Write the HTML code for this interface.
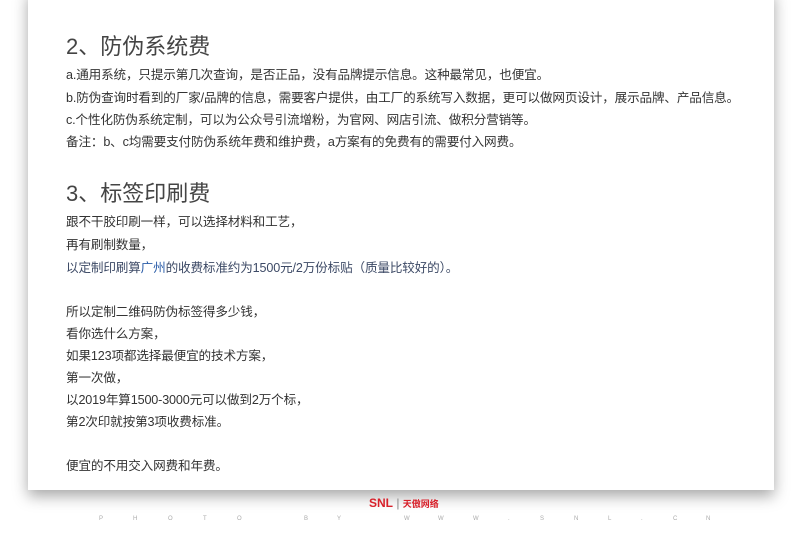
<!DOCTYPE html>
<html><head><meta charset="utf-8"><style>
html,body{margin:0;padding:0;background:#fff;width:800px;height:533px;overflow:hidden;}
body{font-family:"Liberation Sans","Noto Sans CJK SC",sans-serif;position:relative;}
.card{position:absolute;left:28px;top:-10px;width:746px;height:500px;background:#fff;box-shadow:0 6px 14px rgba(0,0,0,0.35);}
.t{position:absolute;left:66px;color:#333;font-size:12.6px;line-height:22px;white-space:nowrap;letter-spacing:-0.15px;}
.h{position:absolute;left:66px;color:#444;font-size:22px;line-height:30px;white-space:nowrap;}
.logo{position:absolute;left:369px;top:497px;font-size:12px;font-weight:bold;color:#d8202a;white-space:nowrap;line-height:12px;}
.photo{position:absolute;top:516px;font-size:6px;color:#aaa;font-family:"Liberation Sans",sans-serif;}
</style></head><body>
<div class="card"></div>
<div class="h" style="top:32px">2、防伪系统费</div>
<div class="t" style="top:64px">a.通用系统，只提示第几次查询，是否正品，没有品牌提示信息。这种最常见，也便宜。</div>
<div class="t" style="top:87px">b.防伪查询时看到的厂家/品牌的信息，需要客户提供，由工厂的系统写入数据，更可以做网页设计，展示品牌、产品信息。</div>
<div class="t" style="top:109px">c.个性化防伪系统定制，可以为公众号引流增粉，为官网、网店引流、做积分营销等。</div>
<div class="t" style="top:131px">备注：b、c均需要支付防伪系统年费和维护费，a方案有的免费有的需要付入网费。</div>
<div class="h" style="top:179px">3、标签印刷费</div>
<div class="t" style="top:211px">跟不干胶印刷一样，可以选择材料和工艺，</div>
<div class="t" style="top:234px">再有刷制数量，</div>
<div class="t" style="top:257px;color:#3d4a66">以定制印刷算<span style="color:#2a5ca8">广州</span>的收费标准约为1500元/2万份标贴（质量比较好的）。</div>
<div class="t" style="top:301px">所以定制二维码防伪标签得多少钱，</div>
<div class="t" style="top:323px">看你选什么方案，</div>
<div class="t" style="top:345px">如果123项都选择最便宜的技术方案，</div>
<div class="t" style="top:367px">第一次做，</div>
<div class="t" style="top:389px">以2019年算1500-3000元可以做到2万个标，</div>
<div class="t" style="top:411px">第2次印就按第3项收费标准。</div>
<div class="t" style="top:455px">便宜的不用交入网费和年费。</div>
<div class="logo">SNL<span style="color:#888;font-weight:normal"> | </span><span style="font-size:9px">天傲网络</span></div>
<div class="photo" style="left:99px">P</div><div class="photo" style="left:133px">H</div><div class="photo" style="left:168px">O</div><div class="photo" style="left:203px">T</div><div class="photo" style="left:237px">O</div>
<div class="photo" style="left:304px">B</div><div class="photo" style="left:337px">Y</div>
<div class="photo" style="left:404px">W</div><div class="photo" style="left:438px">W</div><div class="photo" style="left:473px">W</div><div class="photo" style="left:508px">.</div><div class="photo" style="left:540px">S</div><div class="photo" style="left:574px">N</div><div class="photo" style="left:608px">L</div><div class="photo" style="left:641px">.</div><div class="photo" style="left:673px">C</div><div class="photo" style="left:706px">N</div>
</body></html>
